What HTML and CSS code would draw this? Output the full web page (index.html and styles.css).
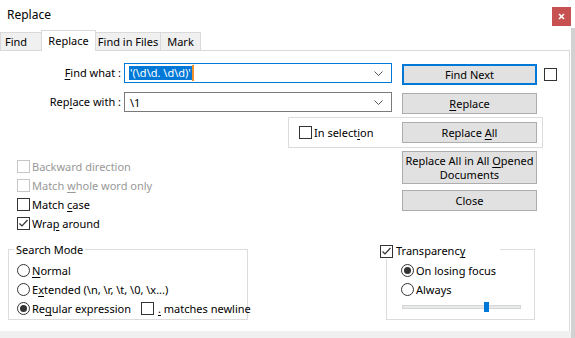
FILE: index.html
```html
<!DOCTYPE html>
<html>
<head>
<meta charset="utf-8">
<link rel="stylesheet" href="styles.css">
</head>
<body>
<div class="screen">
  <div class="window">
    <div class="titlebar">
      <span class="title">Replace</span>
      <span class="close"><svg width="7" height="7" viewBox="0 0 7 7"><path d="M1 1L6 6M6 1L1 6" stroke="#fff" stroke-width="1.6"/></svg></span>
    </div>
    <div class="tabs">
      <div class="tab tab-find">Find</div>
      <div class="tab tab-active">Replace</div>
      <div class="tab tab-files">Find in Files</div>
      <div class="tab tab-mark">Mark</div>
    </div>
    <div class="panel">
      <div class="row row-find">
        <span class="field-label"><u>F</u>ind what :</span>
        <div class="combo combo-focus">
          <span class="combo-text"><span class="sel">'(\d\d. \d\d)'</span><span class="caret"></span></span>
          <svg class="chev" width="9" height="5" viewBox="0 0 9 5"><path d="M0.5 0.5L4.5 4.5L8.5 0.5" fill="none" stroke="#555" stroke-width="1"/></svg>
        </div>
        <button class="btn btn-default">Find Next</button>
        <span class="cb cb-side"></span>
      </div>
      <div class="row row-replace">
        <span class="field-label">Rep<u>l</u>ace with :</span>
        <div class="combo">
          <span class="combo-text"><span class="plain">\1</span></span>
          <svg class="chev" width="9" height="5" viewBox="0 0 9 5"><path d="M0.5 0.5L4.5 4.5L8.5 0.5" fill="none" stroke="#555" stroke-width="1"/></svg>
        </div>
        <button class="btn"><u>R</u>eplace</button>
      </div>
      <div class="selection-box">
        <span class="cb"></span>
        <span class="cb-label">In select<u>i</u>on</span>
        <button class="btn btn-right">Replace <u>A</u>ll</button>
      </div>
      <div class="columns">
        <div class="left-col">
          <div class="check-row disabled"><span class="cb"></span><span>Backward direction</span></div>
          <div class="check-row disabled"><span class="cb"></span><span>Match <u>w</u>hole word only</span></div>
          <div class="check-row"><span class="cb"></span><span>Match <u>c</u>ase</span></div>
          <div class="check-row"><span class="cb"><svg width="11" height="11" viewBox="0 0 11 11"><path d="M1.5 5.5L4 8L9.5 2" fill="none" stroke="#333" stroke-width="1.2"/></svg></span><span>Wra<u>p</u> around</span></div>
        </div>
        <div class="right-col">
          <button class="btn btn-tall">Replace All in All <u>O</u>pened<br>Documents</button>
          <button class="btn btn-close">Close</button>
        </div>
      </div>
      <div class="groups">
        <div class="group group-search">
          <span class="group-title">Search Mode</span>
          <div class="radio-row"><span class="rb"></span><span><u>N</u>ormal</span></div>
          <div class="radio-row"><span class="rb"></span><span>E<u>x</u>tended (\n, \r, \t, \0, \x...)</span></div>
          <div class="radio-row">
            <span class="radio-item"><span class="rb on"></span><span>Re<u>g</u>ular expression</span></span>
            <span class="cb"></span><span class="nl-label"><u>.</u> matches newline</span>
          </div>
        </div>
        <div class="group group-trans">
          <span class="group-title trans-title"><span class="cb"><svg width="11" height="11" viewBox="0 0 11 11"><path d="M1.5 5.5L4 8L9.5 2" fill="none" stroke="#333" stroke-width="1.2"/></svg></span><span>Transparenc<u>y</u></span></span>
          <div class="radio-row"><span class="rb on"></span><span>On losing focus</span></div>
          <div class="radio-row"><span class="rb"></span><span>Always</span></div>
          <div class="slider"><span class="thumb"></span></div>
        </div>
      </div>
    </div>
    <div class="footer"></div>
  </div>
  <div class="edge"></div>
</div>
</body>
</html>
```

FILE: styles.css
```css
* { box-sizing: border-box; }
html, body { margin: 0; padding: 0; }
body {
  font-family: "Noto Sans", "DejaVu Sans", sans-serif;
  font-size: 11px;
  color: #000;
  background: #fff;
}
u { text-underline-offset: 2px; }
.screen { display: flex; width: 575px; height: 338px; overflow: hidden; }
.window { width: 571px; display: flex; flex-direction: column; }
.edge { width: 4px; margin-top: 28px; background: #d2d2d2; }

.titlebar { height: 30px; display: flex; justify-content: space-between; align-items: flex-start; padding-left: 7px; }
.title { line-height: 30px; font-size: 12px; }
.close { width: 19px; height: 19px; margin-top: 7px; background: #c75050; display: flex; align-items: center; justify-content: center; }

.tabs { height: 20px; display: flex; align-items: flex-end; }
.tab {
  height: 18px; line-height: 17px; border: 1px solid #d9d9d9; border-bottom: none;
  background: #f0f0f0; margin-left: -1px; text-align: center; white-space: nowrap;
}
.tab-find { margin-left: 0; width: 42px; padding-right: 10px; }
.tab-active { position: relative; z-index: 2; height: 21px; line-height: 19px; margin-bottom: -1px; background: #fff; width: 55px; }
.tab-files { width: 66px; }
.tab-mark { width: 41px; }

.panel { height: 281px; width: 570px; border-top: 1px solid #d9d9d9; border-right: 1px solid #d9d9d9; }
.footer { flex: 1; background: #f0f0f0; }

.row { display: flex; align-items: flex-start; height: 22px; }
.row-find { margin-top: 12px; }
.row-replace { margin-top: 7px; }
.field-label { width: 121px; text-align: right; line-height: 20px; white-space: nowrap; }
.combo {
  width: 268px; height: 20px; margin-left: 3px; border: 1px solid #7a7a7a;
  display: flex; align-items: center; padding: 0 4px 0 4px; background: #fff;
}
.combo-focus { border-color: #0078d7; }
.combo-text { flex: 1; display: flex; align-items: center; white-space: nowrap; }
.sel { background: #0078d7; color: #fff; line-height: 14px; padding: 0 1px; }
.plain { padding-left: 1px; }
.caret { width: 2px; height: 16px; background: #f0902a; }
.chev { margin-right: 4px; }

.btn {
  width: 135px; height: 21px; margin: 1px 0 0 10px; padding: 0;
  background: #e1e1e1; border: 1px solid #adadad; font: inherit; color: #000;
}
.btn-default { border: 2px solid #0078d7; }
.cb-side { margin: 5px 0 0 7px; }

.cb {
  width: 13px; height: 13px; border: 1px solid #333; background: #fff; flex: none;
  display: flex; align-items: center; justify-content: center;
}
.rb {
  width: 13px; height: 13px; border: 1px solid #333; border-radius: 50%; background: #fff; flex: none;
  display: flex; align-items: center; justify-content: center;
}
.rb.on::after { content: ""; width: 7px; height: 7px; border-radius: 50%; background: #333; }

.selection-box {
  margin: 3px 0 0 288px; width: 255px; height: 31px; border: 1px solid #dcdcdc;
  display: flex; align-items: center; padding: 0 5px 0 10px;
}
.cb-label { margin-left: 2px; white-space: nowrap; }
.btn-right { margin: 0 0 0 auto; }

.columns { display: flex; align-items: flex-start; }
.left-col { width: 402px; padding: 9px 0 0 17px; }
.check-row { display: flex; align-items: center; gap: 2px; height: 19px; white-space: nowrap; }
.check-row.disabled { color: #999; }
.check-row.disabled .cb { border-color: #c6c6c6; }
.right-col { padding-top: 3px; display: flex; flex-direction: column; }
.right-col .btn { margin: 0; }
.btn-tall { height: 33px; line-height: 14px; }
.btn-close { margin-top: 6px !important; }

.groups { display: flex; align-items: flex-start; margin-top: 16px; }
.group { position: relative; height: 71px; border: 1px solid #dcdcdc; padding-top: 11px; }
.group-search { margin-left: 8px; width: 240px; padding-left: 8px; }
.group-trans { margin-left: 138px; width: 149px; padding-left: 14px; }
.group-title { position: absolute; top: -8px; left: 5px; background: #fff; padding: 0 2px; line-height: 16px; white-space: nowrap; }
.trans-title { top: -7px; left: -7px; width: 120px; padding: 0; display: flex; align-items: center; gap: 3px; }
.radio-row { display: flex; align-items: center; gap: 2px; height: 19px; white-space: nowrap; }
.radio-item { display: flex; align-items: center; gap: 2px; width: 122px; flex: none; }
.nl-label { margin-left: 2px; }
.slider {
  position: relative; margin: 6px 0 0 1px; width: 119px; height: 4px;
  background: #e7eaea; border: 1px solid #d6d6d6;
}
.thumb { position: absolute; left: 81px; top: -4px; width: 5px; height: 10px; background: #0078d7; }
```
